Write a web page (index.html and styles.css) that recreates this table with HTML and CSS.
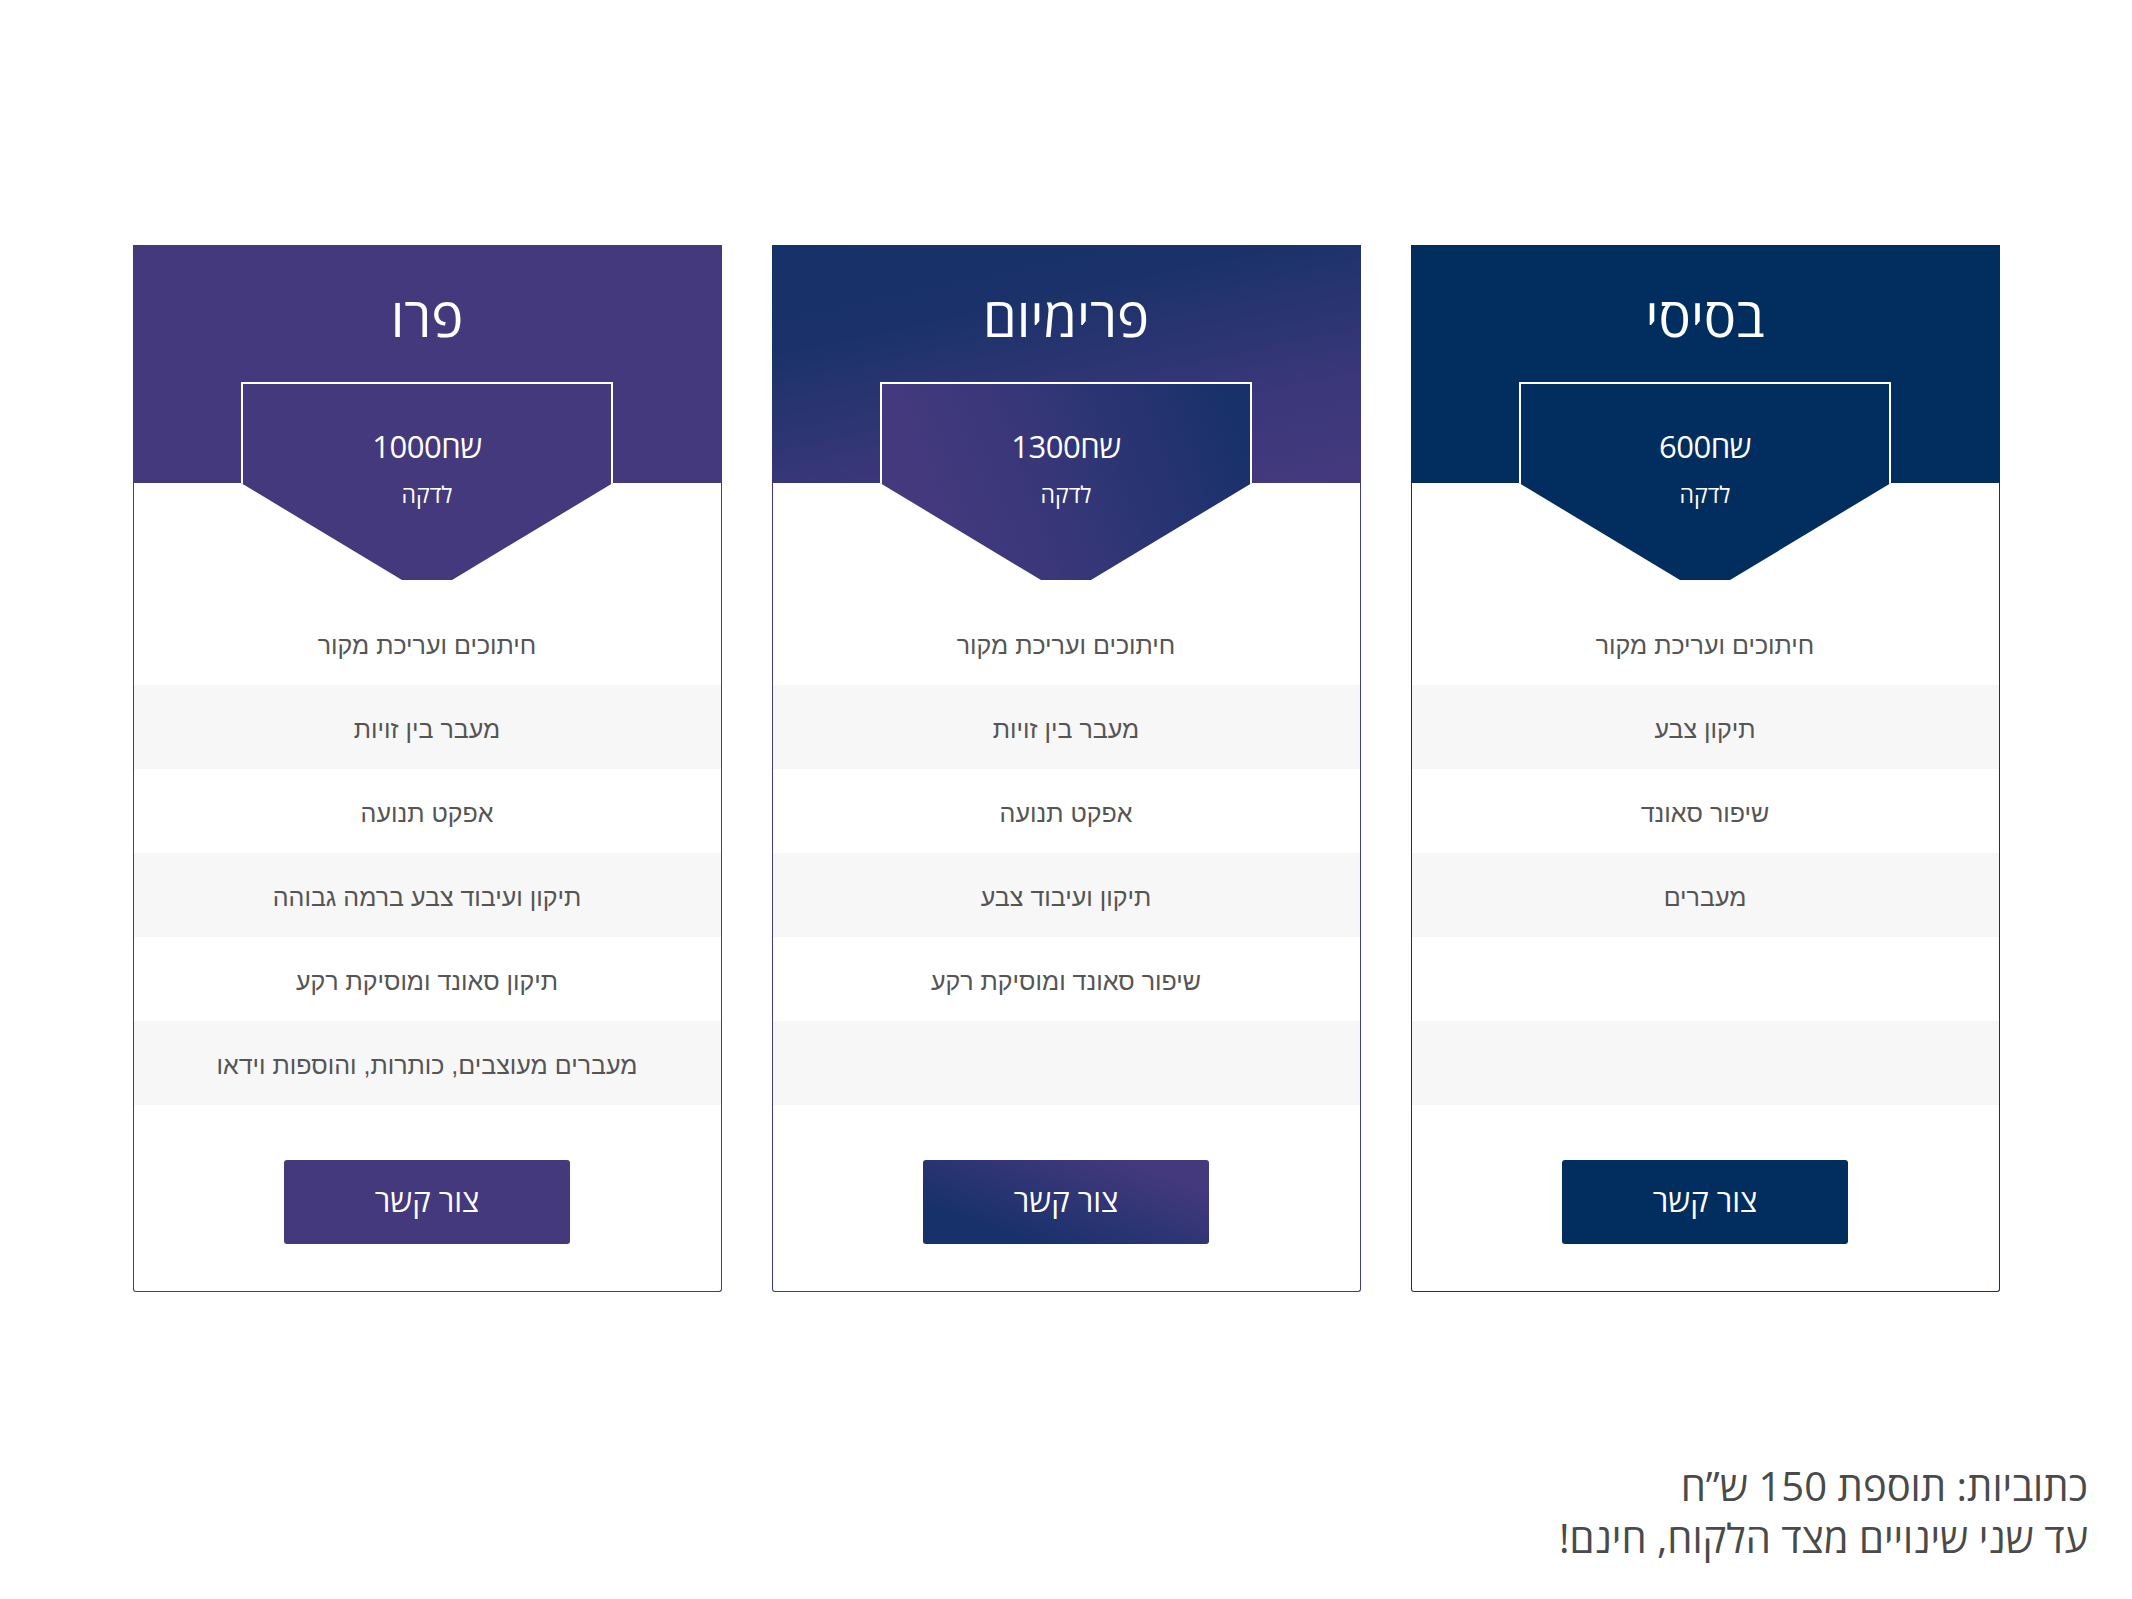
FILE: index.html
```html
<!DOCTYPE html>
<html lang="he" dir="rtl">
<head>
<meta charset="utf-8">
<title>מחירון</title>
<link rel="stylesheet" href="styles.css">
</head>
<body>
<main class="page">
  <section class="plans">
    <article class="plan plan-basic">
      <header class="plan-head">
        <h2 class="plan-title">בסיסי</h2>
        <div class="price-tag">
          <span class="price">שח600</span>
          <span class="per">לדקה</span>
        </div>
      </header>
      <div class="plan-body">
        <ul class="features">
          <li>חיתוכים ועריכת מקור</li>
          <li>תיקון צבע</li>
          <li>שיפור סאונד</li>
          <li>מעברים</li>
          <li></li>
          <li></li>
        </ul>
        <div class="plan-foot"><a class="btn" href="#">צור קשר</a></div>
      </div>
    </article>

    <article class="plan plan-premium">
      <header class="plan-head">
        <h2 class="plan-title">פרימיום</h2>
        <div class="price-tag">
          <span class="price">שח1300</span>
          <span class="per">לדקה</span>
        </div>
      </header>
      <div class="plan-body">
        <ul class="features">
          <li>חיתוכים ועריכת מקור</li>
          <li>מעבר בין זויות</li>
          <li>אפקט תנועה</li>
          <li>תיקון ועיבוד צבע</li>
          <li>שיפור סאונד ומוסיקת רקע</li>
          <li></li>
        </ul>
        <div class="plan-foot"><a class="btn" href="#">צור קשר</a></div>
      </div>
    </article>

    <article class="plan plan-pro">
      <header class="plan-head">
        <h2 class="plan-title">פרו</h2>
        <div class="price-tag">
          <span class="price">שח1000</span>
          <span class="per">לדקה</span>
        </div>
      </header>
      <div class="plan-body">
        <ul class="features">
          <li>חיתוכים ועריכת מקור</li>
          <li>מעבר בין זויות</li>
          <li>אפקט תנועה</li>
          <li>תיקון ועיבוד צבע ברמה גבוהה</li>
          <li>תיקון סאונד ומוסיקת רקע</li>
          <li>מעברים מעוצבים, כותרות, והוספות וידאו</li>
        </ul>
        <div class="plan-foot"><a class="btn" href="#">צור קשר</a></div>
      </div>
    </article>
  </section>

  <p class="note">כתוביות: תוספת 150 ש”ח<br>עד שני שינויים מצד הלקוח, חינם!</p>
</main>
</body>
</html>
```

FILE: styles.css
```css
* { box-sizing: border-box; }

html, body {
  margin: 0;
  padding: 0;
  background: #ffffff;
}

body {
  font-family: "Open Sans", "DejaVu Sans", sans-serif;
  color: #444;
}

.page {
  padding-top: 245px;
}

.plans {
  display: flex;
  justify-content: center;
  gap: 50px;
}

.plan {
  width: 589px;
  display: flex;
  flex-direction: column;
}

/* header */
.plan-head {
  padding-top: 42px;
  display: flex;
  flex-direction: column;
  align-items: center;
  color: #fff;
}

.plan-title {
  margin: 0;
  font-family: "Open Sans", "DejaVu Sans", sans-serif;
  font-weight: 400;
  font-size: 54px;
  line-height: 58px;
  height: 58px;
}

.price-tag {
  position: relative;
  z-index: 1;
  margin-top: 37px;
  margin-bottom: -97px;
  width: 372px;
  height: 198px;
  padding-top: 44px;
  display: flex;
  flex-direction: column;
  align-items: center;
  clip-path: polygon(0 0, 100% 0, 100% 101px, 211px 198px, 161px 198px, 0 101px);
}

.price-tag::before {
  content: "";
  position: absolute;
  top: 0;
  left: 0;
  right: 0;
  height: 101px;
  border: 2px solid #fff;
  border-bottom: none;
}

.price {
  font-size: 31px;
  line-height: 40px;
  letter-spacing: -0.5px;
}

.per {
  margin-top: 13px;
  font-size: 23px;
  line-height: 30px;
}

/* body */
.plan-body {
  padding-top: 118px;
  border: 1.5px solid #3f3d88;
  border-top: none;
  border-radius: 0 0 3px 3px;
}

.plan-basic .plan-body { border-color: #0a346c; }

.features {
  list-style: none;
  margin: 0;
  padding: 0;
}

.features li {
  height: 84px;
  padding-top: 5px;
  line-height: 79px;
  text-align: center;
  font-family: "Liberation Sans", Arial, sans-serif;
  font-size: 25px;
  color: #555;
}

.features li:nth-child(even) {
  background: #f7f7f7;
}

.plan-foot {
  padding: 55px 0 47px;
  display: flex;
  justify-content: center;
}

.btn {
  display: flex;
  align-items: center;
  justify-content: center;
  width: 286px;
  height: 84px;
  border-radius: 3px;
  color: #fff;
  text-decoration: none;
  font-size: 31px;
  padding-bottom: 4px;
}

/* colour themes */
.plan-basic .plan-head,
.plan-basic .price-tag,
.plan-basic .btn { background: #012d5f; }

.plan-pro .plan-head,
.plan-pro .price-tag,
.plan-pro .btn { background: #43397c; }

.plan-premium .plan-head {
  background: linear-gradient(168deg, #17316a 0%, #1b3269 30%, #3a377a 70%, #45397e 100%);
}

.plan-premium .price-tag {
  background: linear-gradient(70deg, #45397e 15%, #3a377a 40%, #18316a 95%);
}

.plan-premium .btn {
  background: linear-gradient(20deg, #17316a 20%, #45397e 85%);
}

/* note */
.note {
  margin: 168px 44px 0 0;
  font-size: 40px;
  line-height: 52px;
  color: #4a4a4a;
  text-align: right;
}
```
